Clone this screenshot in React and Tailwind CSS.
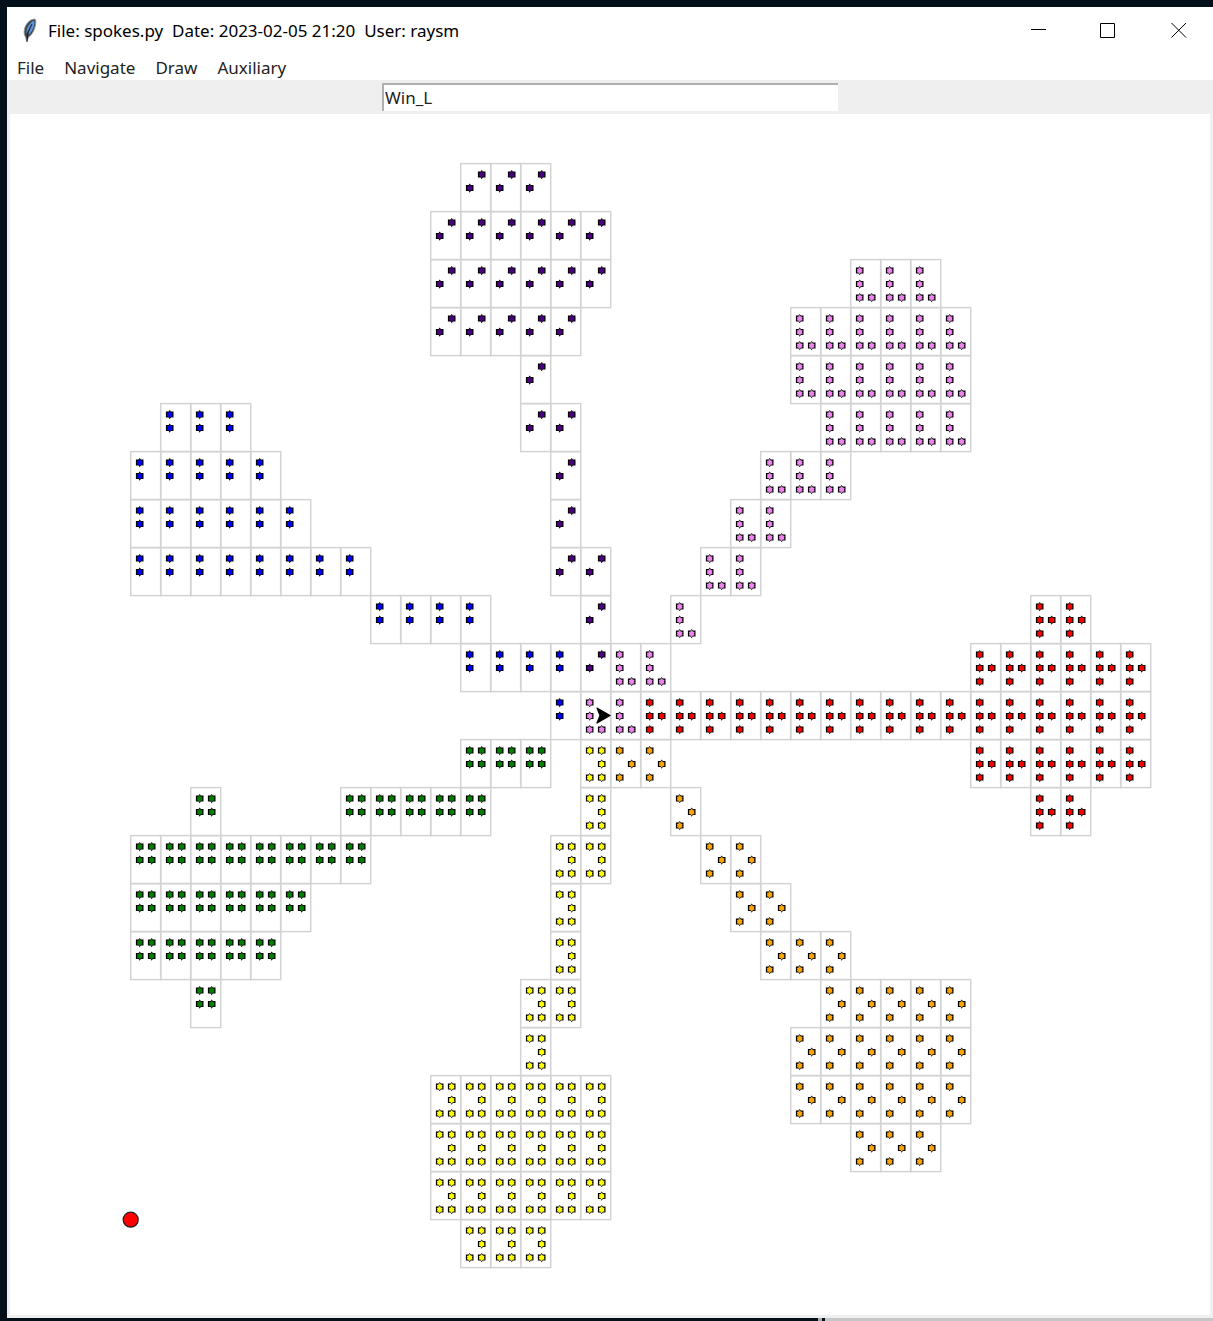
import { useState } from "react";

const CELL_W = 30;
const CELL_H = 48;
const ORIGIN_X = 120.7;
const ORIGIN_Y = 49.6;
const DOT_X = [9, 21];
const DOT_Y = [11, 24.5, 38];

// Dot patterns are [column, row] pairs inside a braille cell;
// runs are [row, first column, last column] of consecutive cells.
const SPOKES = [
  {
    color: "#4b0082",
    dots: [[1, 0], [0, 1]],
    runs: [[0, 11, 13], [1, 10, 15], [2, 10, 15], [3, 10, 14], [4, 13, 13], [5, 13, 14], [6, 14, 14], [7, 14, 14], [8, 14, 15], [9, 15, 15], [10, 15, 15]],
  },
  {
    color: "#0000ff",
    dots: [[0, 0], [0, 1]],
    runs: [[5, 1, 3], [6, 0, 4], [7, 0, 5], [8, 0, 7], [9, 8, 11], [10, 11, 14], [11, 14, 14]],
  },
  {
    color: "#ee82ee",
    dots: [[0, 0], [0, 1], [0, 2], [1, 2]],
    runs: [[2, 24, 26], [3, 22, 27], [4, 22, 27], [5, 23, 27], [6, 21, 23], [7, 20, 21], [8, 19, 20], [9, 18, 18], [10, 16, 17], [11, 15, 16]],
  },
  {
    color: "#ff0000",
    dots: [[0, 0], [0, 1], [0, 2], [1, 1]],
    runs: [[9, 30, 31], [10, 28, 33], [11, 17, 33], [12, 28, 33], [13, 30, 31]],
  },
  {
    color: "#ffa500",
    dots: [[0, 0], [1, 1], [0, 2]],
    runs: [[12, 16, 17], [13, 18, 18], [14, 19, 20], [15, 20, 21], [16, 21, 23], [17, 23, 27], [18, 22, 27], [19, 22, 27], [20, 24, 26]],
  },
  {
    color: "#ffff00",
    dots: [[0, 0], [1, 0], [1, 1], [0, 2], [1, 2]],
    runs: [[12, 15, 15], [13, 15, 15], [14, 14, 15], [15, 14, 14], [16, 14, 14], [17, 13, 14], [18, 13, 13], [19, 10, 15], [20, 10, 15], [21, 10, 15], [22, 11, 13]],
  },
  {
    color: "#008000",
    dots: [[0, 0], [1, 0], [0, 1], [1, 1]],
    runs: [[12, 11, 13], [13, 2, 2], [13, 7, 11], [14, 0, 7], [15, 0, 5], [16, 0, 4], [17, 2, 2]],
  },
];

const cells = SPOKES.flatMap(({ color, dots, runs }) =>
  runs.flatMap(([row, from, to]) =>
    Array.from({ length: to - from + 1 }, (_, i) => ({
      x: ORIGIN_X + (from + i) * CELL_W,
      y: ORIGIN_Y + row * CELL_H,
      color,
      dots,
    }))
  )
);

function Dot({ x, y, color }) {
  return (
    <g transform={`translate(${x} ${y})`}>
      <path d="M-3.8-3H-1.1L0-4.7L1.1-3H3.8V3H1.1L0 4.7L-1.1 3H-3.8Z" fill="#000" />
      <path d="M0-3.6L1.1-2.2L2.9-1.7L2.3 0L2.9 1.7L1.1 2.2L0 3.6L-1.1 2.2L-2.9 1.7L-2.3 0L-2.9-1.7L-1.1-2.2Z" fill={color} />
    </g>
  );
}

function Drawing() {
  return (
    <svg viewBox="0 0 1200 1201" className="block w-full" role="img" aria-label="Braille spokes drawing">
      <g fill="none" stroke="#d3d3d3" strokeWidth="1.5">
        {cells.map((c) => (
          <rect key={`${c.x}-${c.y}`} x={c.x} y={c.y} width={CELL_W} height={CELL_H} />
        ))}
      </g>
      {cells.flatMap((c) =>
        c.dots.map(([dx, dy]) => (
          <Dot key={`${c.x}-${c.y}-${dx}-${dy}`} x={c.x + DOT_X[dx]} y={c.y + DOT_Y[dy]} color={c.color} />
        ))
      )}
      <circle cx="120.7" cy="1105.7" r="7.5" fill="#f00" stroke="#222" strokeWidth="1.3" />
      <path d="M587 594L600 601.5L587 609L590 601.5Z" fill="#000" stroke="#000" strokeWidth="1.2" strokeLinejoin="round" />
    </svg>
  );
}

function Feather() {
  return (
    <svg viewBox="0 0 16 26" className="h-[26px] w-4" aria-hidden="true">
      <path d="M13 1C8 1 3.5 6 2.5 11C1.8 14 2 17 3.5 19L5 24L6.5 19C10 17 12.5 12 13.5 7C14 4 14 2 13 1Z" fill="#3b434c" stroke="#9a9a9a" strokeWidth="1" />
      <path d="M12 2.5C8.5 4 5.5 8 4.5 12.5L4.5 16L9.5 6.5L6 17C10 14.5 12 9 12.5 5Z" fill="#5b95dc" />
      <path d="M10 6L6 14L5 23.5" fill="none" stroke="#15191e" strokeWidth="1" />
    </svg>
  );
}

export default function App() {
  const [name, setName] = useState("Win_L");
  return (
    <div className="flex min-h-screen flex-col bg-[#03101a] pt-[7px] pl-[7px] font-['Noto_Sans','Open_Sans',sans-serif] text-black">
      <main className="flex flex-1 flex-col bg-white">
        <header className="flex h-12 items-center">
          <div className="flex flex-1 items-center gap-[2px] pl-[15px]">
            <Feather />
            <h1 className="pl-2 text-[17px] leading-6 whitespace-pre">File: spokes.py  Date: 2023-02-05 21:20  User: raysm</h1>
          </div>
          <div className="flex h-full items-center pr-[26px]">
            <button aria-label="Minimize" className="mr-[53px]">
              <svg className="block size-4" viewBox="0 0 16 16"><path d="M0 6.5H15" stroke="#000" /></svg>
            </button>
            <button aria-label="Maximize" className="mr-[55px]">
              <svg className="block size-4" viewBox="0 0 16 16"><path d="M.5.5H14.5V14.5H.5Z" fill="none" stroke="#000" /></svg>
            </button>
            <button aria-label="Close">
              <svg className="block size-4" viewBox="0 0 16 16"><path d="M.5 0L15 14.5M15 0L.5 14.5" stroke="#000" /></svg>
            </button>
          </div>
        </header>
        <nav className="flex h-[25px] items-center gap-5 pl-[10px] text-[17px] leading-6 text-[#222]">
          <button>File</button>
          <button>Navigate</button>
          <button>Draw</button>
          <button>Auxiliary</button>
        </nav>
        <div className="flex h-[34px] justify-center bg-[#efefef] py-[3px]">
          <input
            aria-label="Window name"
            value={name}
            onChange={(e) => setName(e.target.value)}
            className="w-[456px] border-t-2 border-l-2 border-[#b0b0b0] bg-white pl-[1px] text-[17px] leading-6 text-[#222] outline-none"
          />
        </div>
        <div className="flex-1 border-r-3 border-b-3 border-l-3 border-[#f0f0f0]">
          <Drawing />
        </div>
      </main>
      <div className="-ml-[7px] flex h-[3px]">
        <div className="w-[67.4%]" />
        <div className="w-1 bg-[#aaaaaa]" />
        <div className="w-[3px]" />
        <div className="flex-1 bg-[#c6c6c6]" />
      </div>
    </div>
  );
}
